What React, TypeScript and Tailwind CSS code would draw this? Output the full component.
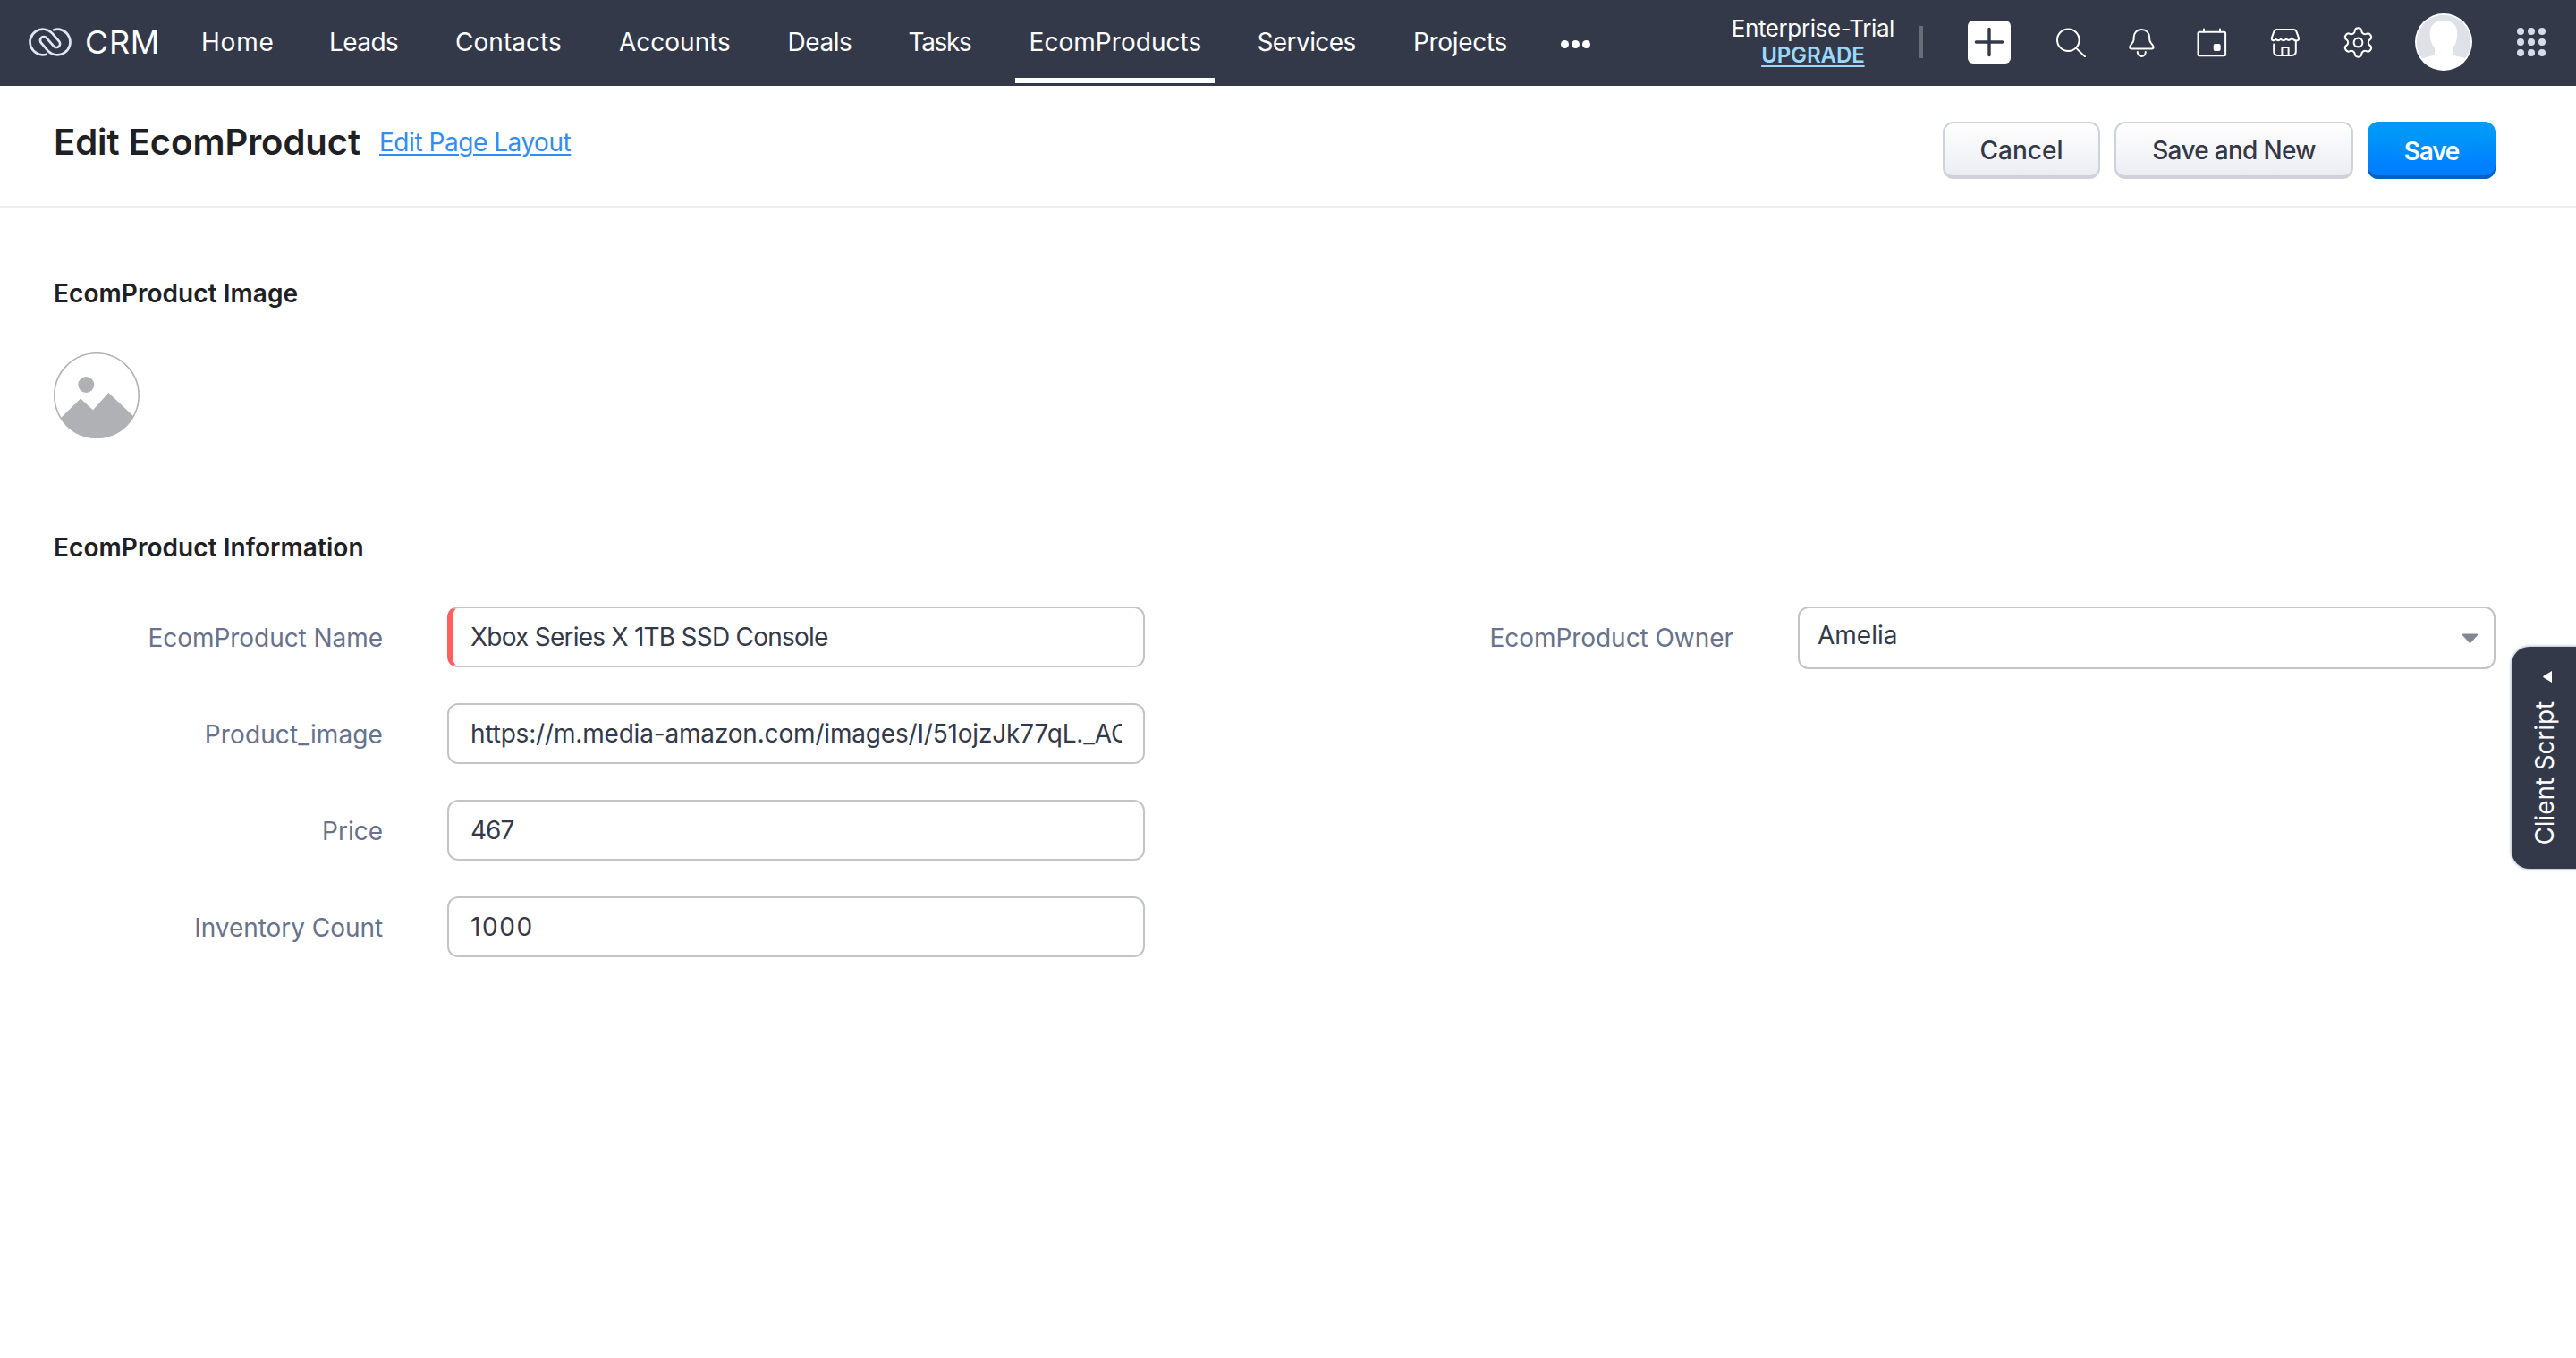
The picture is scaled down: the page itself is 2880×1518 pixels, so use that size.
import { Settings } from "lucide-react";

const navItems = [
  { label: "Home", cls: "w-[111px] tracking-[0.79px]" },
  { label: "Leads", cls: "w-[109px] tracking-[-0.57px]" },
  { label: "Contacts", cls: "w-[151px] tracking-[0.04px]" },
  { label: "Accounts", cls: "w-[156.5px]" },
  { label: "Deals", cls: "w-[103px] tracking-[-0.45px]" },
  { label: "Tasks", cls: "w-[103px] tracking-[-1.35px]" },
  { label: "EcomProducts", cls: "w-[223px] tracking-[0.05px]", active: true },
  { label: "Services", cls: "w-[142.5px] tracking-[-0.59px]" },
  { label: "Projects", cls: "w-[138px] tracking-[-0.32px]" },
];

function Logo() {
  return (
    <svg width="48" height="32" viewBox="0 0 48 32" fill="none" stroke="#e0e5f7" strokeWidth="2.7" strokeLinecap="round">
      <path d="M19.8 29.7A14.3 14.3 0 1 1 26.3 6.2L34 15.2A4 4 0 0 1 28 20.6L20 11.4A4 4 0 0 0 14 16.8L21.7 25.8A14.3 14.3 0 1 0 28.2 2.3" />
    </svg>
  );
}

function PlusButton() {
  return (
    <div className="ml-[50px] flex size-12 items-center justify-center rounded-md bg-white">
      <svg width="34" height="34" viewBox="0 0 34 34" stroke="#343949" strokeWidth="3.4" strokeLinecap="round">
        <path d="M17 2.4V31.6M2.4 17H31.6" />
      </svg>
    </div>
  );
}

function SearchIcon() {
  return (
    <svg className="ml-[51px]" width="33" height="33" viewBox="0 0 33 33" fill="none" stroke="#fff" strokeWidth="2" strokeLinecap="round">
      <circle cx="13.3" cy="13.7" r="12.3" />
      <path d="M22 22.6L32 32.2" />
    </svg>
  );
}

function BellIcon() {
  return (
    <svg className="ml-12" width="29" height="33" viewBox="0 0 29 33" fill="none" stroke="#fff" strokeWidth="2" strokeLinecap="round" strokeLinejoin="round">
      <path d="M14.3 2C9 2 5.6 6 5.6 11V13C5.6 17.5 1.2 18.5 1.2 21.8Q1.2 23.5 3 23.5H25.6Q27.6 23.5 27.6 21.8C27.6 18.5 23.2 17.5 23.2 13V11C23.2 6 19.6 2 14.3 2Z" />
      <path d="M9.8 27C9.8 29.8 11.7 32 14.3 32S18.8 29.8 18.8 27" />
    </svg>
  );
}

function CalendarIcon() {
  return (
    <svg className="ml-[47px]" width="34" height="33" viewBox="0 0 34 33" fill="none" stroke="#fff" strokeWidth="2" strokeLinecap="round">
      <rect x="1.5" y="4.8" width="30.6" height="26.4" rx="1.5" />
      <path d="M8 1.4V4.5M26 1.4V4.5" />
      <rect x="18.7" y="18" width="8" height="8" rx="2" fill="#fff" stroke="none" />
    </svg>
  );
}

function StoreIcon() {
  return (
    <svg className="ml-12" width="34" height="33" viewBox="0 0 34 33" fill="none" stroke="#fff" strokeWidth="2" strokeLinecap="round" strokeLinejoin="round">
      <path d="M6.2 13.2Q5 14.6 3.4 14.2Q1.4 13.6 1.8 11.4L4.4 4.2Q5.2 2 7.4 2H26.6Q28.6 2 29.4 4.2L32 11.4Q32.4 14.4 29.6 14.4Q26.6 14.4 24.2 11.6" />
      <path d="M6.4 13Q9.2 15.4 12 12.6Q14.8 16 18 12.6Q21.6 15.6 24.2 11.6" />
      <path d="M4.2 18.6V26.6Q4.2 31 8.6 31H24.2Q28.8 31 28.8 26.6V15" />
      <path d="M13.4 30.6V22H20.6V30.6" />
    </svg>
  );
}

function Avatar() {
  return (
    <svg className="ml-11" width="64" height="64" viewBox="0 0 64 64">
      <defs>
        <clipPath id="avatar-clip">
          <circle cx="32" cy="32" r="31" />
        </clipPath>
      </defs>
      <circle cx="32" cy="32" r="32" fill="#fff" />
      <circle cx="32" cy="32" r="30.2" fill="#dfe1e8" />
      <g clipPath="url(#avatar-clip)" fill="#fff">
        <path d="M32 8C41 8 47.4 13 47.2 22C47 30 45.5 35 42.4 38.5V44C42.8 49 50 47.5 58 51V64H6V51C14 47.5 21.6 49 22 44V38.5C18.5 35 17 30 16.6 22C16.4 13 23 8 32 8Z" />
      </g>
    </svg>
  );
}

function AppsGrid() {
  return (
    <div className="ml-[50px] grid grid-cols-3 gap-1">
      {Array.from({ length: 9 }, (_, i) => (
        <span key={i} className="size-2 rounded-full bg-[#d8dcea]" />
      ))}
    </div>
  );
}

function TopBar() {
  return (
    <header className="flex h-24 items-center bg-[#343949] pr-[34px] pb-0.5 pl-8 text-white">
      <Logo />
      <span className="ml-[15px] w-[114px] text-[36px] leading-10 tracking-[0.6px]">CRM</span>
      <nav className="flex h-24 items-center gap-8">
        {navItems.map((item) => (
          <a key={item.label} className={"relative flex h-24 items-center px-4 whitespace-nowrap " + item.cls}>
            {item.label}
            {item.active && <span className="absolute bottom-[2px] left-0 h-1.5 w-full bg-white" />}
          </a>
        ))}
        <div className="mt-1 ml-[11px] flex gap-[3px]">
          <span className="size-[9px] rounded-full bg-white" />
          <span className="size-[9px] rounded-full bg-white" />
          <span className="size-[9px] rounded-full bg-white" />
        </div>
      </nav>
      <div className="ml-auto flex items-center">
        <div className="flex flex-col items-center leading-[30px] whitespace-nowrap">
          <span className="text-[26px] tracking-[-0.4px]">Enterprise-Trial</span>
          <span className="text-2xl leading-[30px] font-semibold tracking-[-0.09px] text-[#9bd9fc] underline decoration-2 underline-offset-[3px]">UPGRADE</span>
        </div>
        <span className="ml-7 h-9 w-1 bg-[#686d7a]" />
        <PlusButton />
        <SearchIcon />
        <BellIcon />
        <CalendarIcon />
        <StoreIcon />
        <Settings className="ml-[45px]" size={39} strokeWidth={1.25} />
        <Avatar />
        <AppsGrid />
      </div>
    </header>
  );
}

function PageHeader() {
  const plain =
    "h-16 rounded-xl border-2 border-b-4 border-[#d0d2da] bg-linear-to-b from-white to-[#ecedf3] pt-0.5 font-medium text-[#343949] whitespace-nowrap";
  return (
    <div className="flex h-[136px] items-start justify-between border-b-2 border-[#eeeeef] pr-[90px] pl-[60px]">
      <div className="mt-[38px] flex items-center leading-[50px] whitespace-nowrap">
        <h1 className="w-[364px] text-[40px] leading-[50px] font-semibold tracking-[-0.04px] text-[#1f2023]">Edit EcomProduct</h1>
        <a className="tracking-[-0.46px] text-[#338cf0] underline decoration-2 underline-offset-[3px]">Edit Page Layout</a>
      </div>
      <div className="mt-10 flex gap-4">
        <button className={plain + " w-44"}>Cancel</button>
        <button className={plain + " w-[267px] tracking-[-0.7px]"}>Save and New</button>
        <button className="h-16 w-[143px] rounded-xl bg-linear-to-b from-[#0099f7] from-20% to-[#0080ff] to-75% pt-px font-semibold tracking-[-1.25px] text-white shadow-[inset_0_-4px_0_#0060cc]">
          Save
        </button>
      </div>
    </div>
  );
}

function ImagePlaceholder() {
  return (
    <svg className="mt-[46px]" width="96" height="96" viewBox="0 0 96 96">
      <defs>
        <clipPath id="image-clip">
          <circle cx="48" cy="48" r="48" />
        </clipPath>
      </defs>
      <circle cx="48" cy="48" r="47.2" fill="#fff" stroke="#b0b2b5" strokeWidth="1.6" />
      <circle cx="36.3" cy="36" r="9" fill="#afb1b5" />
      <path d="M0 81L30 51.5L44 64.2L61.3 45L96 77.5V96H0Z" fill="#afb1b5" clipPath="url(#image-clip)" />
    </svg>
  );
}

const fields = [
  { label: "EcomProduct Name", value: "Xbox Series X 1TB SSD Console", labelCls: "tracking-[-0.05px]", cls: "tracking-[-0.76px] border-l-[6px] border-l-[#ff5f5f] pl-5" },
  { label: "Product_image", value: "https://m.media-amazon.com/images/I/51ojzJk77qL._AC_SL1500_.jpg", labelCls: "tracking-[0.1px]", cls: "tracking-[-0.18px] pl-6" },
  { label: "Price", value: "467", labelCls: "", cls: "tracking-[-0.98px] pl-6" },
  { label: "Inventory Count", value: "1000", labelCls: "tracking-[-0.05px]", cls: "tracking-[1.6px] pl-6" },
];

function ProductForm() {
  return (
    <div className="mt-[46px] flex items-start">
      <div className="flex flex-col gap-10">
        {fields.map((f) => (
          <label key={f.label} className="flex h-[68px] items-center">
            <span className={"w-[368px] pt-0.5 text-right text-[#68728a] " + f.labelCls}>{f.label}</span>
            <input
              readOnly
              value={f.value}
              className={"ml-[72px] h-[68px] w-[780px] rounded-xl border-2 border-[#c2c4c9] bg-white pr-6 pb-px text-[#343949] outline-none " + f.cls}
            />
          </label>
        ))}
      </div>
      <div className="flex flex-1 items-center pr-[90px]">
        <span className="flex-1 text-right tracking-[-0.05px] text-[#68728a]">EcomProduct Owner</span>
        <div className="ml-[72px] flex h-[70px] w-[780px] items-center justify-between rounded-xl border-2 border-[#c2c4c6] pr-[17px] pl-5 text-[#343949]">
          <span className="pb-1.5">Amelia</span>
          <svg className="mt-0.5" width="19" height="12" viewBox="0 0 19 12" fill="#828792">
            <path d="M2 0.5H17Q19 1 17.6 2.6L10.6 10.2Q9.5 11.2 8.4 10.2L1.4 2.6Q0 1 2 0.5Z" />
          </svg>
        </div>
      </div>
    </div>
  );
}

function ClientScriptTab() {
  return (
    <div className="absolute top-[723px] right-0 flex h-[248px] w-[72px] flex-col items-center rounded-l-[20px] bg-[#343949] text-white shadow-[0_0_3px_1px_#b4bacb]">
      <svg className="mt-[27px] ml-2" width="10" height="13" viewBox="0 0 10 13" fill="#fff">
        <path d="M10 0V13L0.5 7.2Q0 6.5 0.5 5.8Z" />
      </svg>
      <span className="mt-[21px] ml-px rotate-180 leading-[34px] tracking-[-0.11px] whitespace-nowrap [writing-mode:vertical-rl]">Client Script</span>
    </div>
  );
}

export default function App() {
  return (
    <div className="relative h-[1518px] w-[2880px] overflow-hidden bg-white font-['Inter',sans-serif] text-[28px] leading-[34px]">
      <TopBar />
      <PageHeader />
      <main className="pt-[76px] pl-[60px]">
        <h2 className="leading-10 font-semibold tracking-[0.06px] text-[#1f2023]">EcomProduct Image</h2>
        <ImagePlaceholder />
        <h2 className="mt-[102px] leading-10 font-semibold tracking-[0.06px] text-[#1f2023]">EcomProduct Information</h2>
        <ProductForm />
      </main>
      <ClientScriptTab />
    </div>
  );
}
